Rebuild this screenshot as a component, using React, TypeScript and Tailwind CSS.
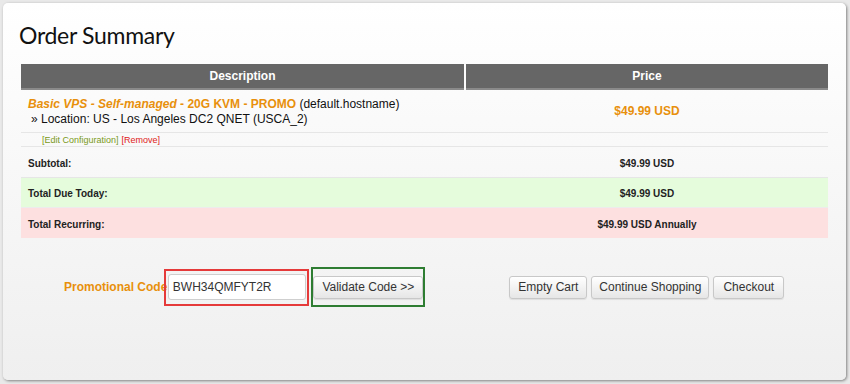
import React from "react";

const arial = { fontFamily: '"Liberation Sans", Arial, sans-serif' };

function Btn({ children, px = "px-[10px]" }: { children: React.ReactNode; px?: string }) {
  return (
    <button
      type="button"
      className={`h-[23px] whitespace-nowrap rounded-[3px] border border-[#c8c8c8] bg-gradient-to-b from-white to-[#e6e6e6] ${px} text-[12px] leading-none text-[#333] shadow-[0_1px_1px_rgba(0,0,0,0.08)]`}
    >
      {children}
    </button>
  );
}

function TotalRow({
  label,
  value,
  bg,
  h,
}: {
  label: string;
  value: string;
  bg: string;
  h: string;
}) {
  return (
    <div className={`grid grid-cols-[443px_1fr] gap-x-[2px] ${bg}`}>
      <div className={`flex ${h} items-center px-[7px] pt-[2px] text-[10px] font-bold text-[#222]`}>
        {label}
      </div>
      <div className={`flex ${h} items-center justify-center pt-[2px] text-[10px] font-bold text-[#222]`}>
        {value}
      </div>
    </div>
  );
}

export default function App() {
  return (
    <div className="h-[384px] w-[850px] bg-[#e9e9e9] pl-[3px] pt-[3px]" style={arial}>
      <div className="h-[377px] w-[843px] rounded-[5px] bg-gradient-to-b from-white to-[#efefef] shadow-[1px_1px_3px_rgba(0,0,0,0.45)]">
        <h1
          className="px-[16px] pt-[17px] text-[23px] leading-[30px] tracking-[-0.3px] text-[#111]"
          style={{ fontFamily: 'Lato, "Open Sans", sans-serif' }}
        >
          Order Summary
        </h1>

        <div className="ml-[18px] mt-[14px] w-[807px]">
          {/* header */}
          <div className="grid grid-cols-[443px_1fr] gap-x-[2px]">
            <div className="flex h-[26px] items-center justify-center border-b-2 border-[#8a8a8a] bg-[#666] text-[12px] font-bold text-white">
              Description
            </div>
            <div className="flex h-[26px] items-center justify-center border-b-2 border-[#8a8a8a] bg-[#666] text-[12px] font-bold text-white">
              Price
            </div>
          </div>

          {/* product */}
          <div className="grid grid-cols-[443px_1fr] gap-x-[2px] border-b border-[#e6e6e6]">
            <div className="h-[42px] px-[7px] pt-[7px] text-[12px] leading-[15px] text-[#111]">
              <div>
                <span className="font-bold italic text-[#e8900c]">
                  Basic VPS - Self-managed
                </span>
                <span className="font-bold text-[#e8900c]"> - 20G KVM - PROMO</span>{" "}
                (default.hostname)
              </div>
              <div className="pl-[3px]">» Location: US - Los Angeles DC2 QNET (USCA_2)</div>
            </div>
            <div className="flex h-[42px] items-center justify-center text-[12px] font-bold text-[#e8900c]">
              $49.99 USD
            </div>
          </div>

          {/* edit row */}
          <div className="grid grid-cols-[443px_1fr] gap-x-[2px] border-b border-[#e6e6e6]">
            <div className="flex h-[13px] items-center pl-[21px] pt-px text-[9px] leading-none">
              <span className="text-[#7a9a1a]">[Edit Configuration]</span>
              <span className="ml-[3px] text-[#e02020]">[Remove]</span>
            </div>
            <div />
          </div>

          <TotalRow label="Subtotal:" value="$49.99 USD" bg="" h="h-[30px]" />
          <div className="h-px bg-[#e6e6e6]" />
          <TotalRow label="Total Due Today:" value="$49.99 USD" bg="bg-[#e5fcdc]" h="h-[29px]" />
          <div className="h-px bg-[#ececec]" />
          <TotalRow label="Total Recurring:" value="$49.99 USD Annually" bg="bg-[#fde0e0]" h="h-[30px]" />
        </div>

        {/* promo + actions */}
        <div className="mt-[29px] flex items-center">
          <div className="ml-[61px] text-[12px] font-bold text-[#e8900c]">Promotional Code</div>
          <div className="-ml-[3px] flex h-[37px] w-[145px] items-center justify-center border-2 border-[#e53a3a]">
            <div className="flex h-[26px] w-[138px] items-center rounded-[3px] border border-[#cfcfcf] bg-white px-[4px] text-[12px] text-[#333]">
              BWH34QMFYT2R
            </div>
          </div>
          <div className="ml-[2px] flex h-[40px] w-[114px] items-center justify-center border-2 border-[#2e7d32]">
            <Btn px="px-[8px]">Validate Code &gt;&gt;</Btn>
          </div>
          <div className="ml-[84px] flex gap-[4px]">
            <Btn px="px-[8px]">Empty Cart</Btn>
            <Btn px="px-[7px]">Continue Shopping</Btn>
            <Btn px="px-[9px]">Checkout</Btn>
          </div>
        </div>
      </div>
    </div>
  );
}
